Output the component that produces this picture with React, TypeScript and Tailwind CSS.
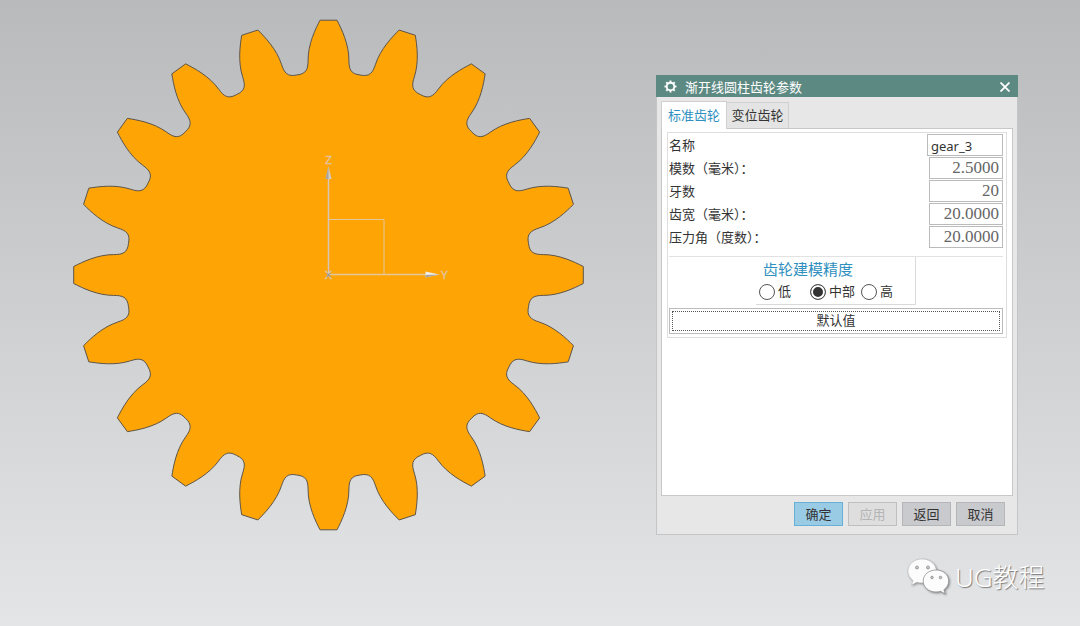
import { useState } from "react";

interface Param {
  id: string;
  label: string;
  value: string;
}

const params: Param[] = [
  { id: "module", label: "模数（毫米）：", value: "2.5000" },
  { id: "teeth", label: "牙数", value: "20" },
  { id: "width", label: "齿宽（毫米）：", value: "20.0000" },
  { id: "angle", label: "压力角（度数）：", value: "20.0000" },
];

const precisions = [
  { id: "low", label: "低", className: "w-[51px]" },
  { id: "mid", label: "中部", className: "w-[51px]" },
  { id: "high", label: "高", className: "w-[40px]" },
];

const TEETH = 20;

// right flank of one tooth, from the tip down to the middle of the root
const flank = [
  [8.5, -254.8],
  [13, -246],
  [20.4, -231],
  [20.4, -215],
  [20.4, -206],
  [22, -201],
  [31.7, -200],
];

function gearPath() {
  const step = (2 * Math.PI) / TEETH;
  const at = ([x, y]: number[], a: number) =>
    `${(x * Math.cos(a) - y * Math.sin(a)).toFixed(2)} ${(x * Math.sin(a) + y * Math.cos(a)).toFixed(2)}`;
  const mirrored = flank.map(([x, y]) => [-x, y]).reverse();
  let d = "";
  for (let i = 0; i < TEETH; i++) {
    const a = i * step;
    const r = flank.map((p) => at(p, a));
    const l = mirrored.map((p) => at(p, a + step));
    d += `${i === 0 ? "M" : "L"}${r[0]}`;
    d += `C${r[1]} ${r[2]} ${r[3]}C${r[4]} ${r[5]} ${r[6]}`;
    d += `C${l[1]} ${l[2]} ${l[3]}C${l[4]} ${l[5]} ${l[6]}`;
  }
  return d + "Z";
}

function Gear() {
  return (
    <svg className="absolute left-[68px] top-[15px]" width="520" height="520" viewBox="-260.5 -260 520 520">
      <path d={gearPath()} fill="#ffa405" stroke="#5d5549" strokeWidth="1" strokeLinejoin="round" />
      <g fill="none" stroke="#e3c79d" strokeWidth="1">
        <path d="M0 -55.5H55.5V0" />
        <path d="M0 -0.5H98" strokeWidth="1.3" />
        <path d="M0 0V-100" stroke="#d6c5b8" strokeWidth="1.5" />
      </g>
      <path d="M0 -109L3 -96H-3Z" fill="#d3ccc5" />
      <path d="M0 -109L0 -96H-3Z" fill="#a9a39d" />
      <path d="M111 -0.5L97 2.500V-3.500Z" fill="#f0ece6" />
      <path d="M111 -0.5L97 2.500V0Z" fill="#a8a39d" />
      <g fill="#dfc6a8" stroke="#dfc6a8" strokeWidth="0.3" fontFamily="Liberation Sans, sans-serif" fontSize="11" textAnchor="middle">
        <text x="0" y="-111">Z</text>
        <text x="116" y="4">Y</text>
        <text x="0" y="4" fill="#cfcac5">X</text>
      </g>
      <path d="M-2 -2L2 2M-2 2L2 -2" stroke="#8b8680" strokeWidth="1" />
    </svg>
  );
}

function CogIcon() {
  return (
    <svg width="13" height="13" viewBox="-6.5 -6.5 13 13" fill="none" stroke="#fff" aria-hidden="true">
      <circle r="3.8" strokeWidth="1.900" />
      {[0, 45, 90, 135, 180, 225, 270, 315].map((a) => (
        <path key={a} d="M0 -4V-6" strokeWidth="1.900" transform={`rotate(${a})`} />
      ))}
    </svg>
  );
}

function Watermark() {
  return (
    <div className="absolute left-[906px] top-[557px] flex items-center gap-[5px]">
      <svg width="44" height="40" viewBox="0 0 44 40" className="drop-shadow-[1px_1px_1px_#888]">
        <path
          d="M16 2C8 2 2 7.5 2 14.2c0 3.8 2 7 5 9.2L5.6 28l5.2-2.8c1.700.5 3.400.7 5.200.7 8 0 14.300-5.300 14.300-11.900S24 2 16 2Z"
          fill="#fcfcfc"
          stroke="#b4b5b7"
          strokeWidth="0.5"
        />
        <path
          d="M30 13c-7.200 0-12.800 4.800-12.800 11S22.800 35 30 35c1.600 0 3.200-.2 4.600-.7l4.600 2.700-1.300-4.300c2.900-2 4.800-5.100 4.800-8.700C42.700 17.800 37.200 13 30 13Z"
          fill="#fcfcfc"
          stroke="#909193"
          strokeWidth="0.8"
        />
        <g fill="#c4c5c6" stroke="#8d8e90" strokeWidth="0.8">
          <circle cx="11" cy="10.500" r="1.500" />
          <circle cx="22" cy="10.500" r="1.500" />
          <circle cx="26" cy="20.500" r="1.300" />
          <circle cx="34.500" cy="20.500" r="1.300" />
        </g>
      </svg>
      <span className="text-[26px] font-light leading-10 text-white [text-shadow:1px_1px_1px_#777]">UG教程</span>
    </div>
  );
}

export default function App() {
  const [tab, setTab] = useState("standard");
  const [precision, setPrecision] = useState("mid");

  const tabClass = (id: string) =>
    tab === id
      ? "h-[28px] w-[66px] -mb-px border border-b-0 border-[#d0d0d0] bg-white text-[#2f8fc0]"
      : "h-[26px] w-[62px] border border-l-0 border-b-0 border-[#d0d0d0] bg-[#e4e4e4] pt-px text-[#333]";

  const buttonClass = "h-6 w-[49px] border pt-px";

  return (
    <main className="relative min-h-screen overflow-hidden bg-linear-to-b from-[#b9babc] to-[#e4e5e7] font-['Noto_Sans','Noto_Sans_CJK_SC',sans-serif]">
      <Gear />

      <section
        role="dialog"
        aria-labelledby="dialog-title"
        className="absolute left-[656px] top-[75px] w-[362px] border border-t-0 border-[#c4c5c7] bg-[#e7e7e7] text-[13px] text-[#333]"
      >
        <header className="-mx-px flex h-[22px] items-center bg-[#5c8982] pl-2 pr-[5px] text-white">
          <CogIcon />
          <h1 id="dialog-title" className="ml-2 flex-1 pt-px text-[13px] leading-5">
            渐开线圆柱齿轮参数
          </h1>
          <button type="button" aria-label="关闭" className="flex h-4 w-4 items-center justify-center pt-px">
            <svg width="10" height="10" viewBox="0 0 10 10" fill="none" stroke="#fff" strokeWidth="1.800">
              <path d="M0.5 0.5L9.500 9.500M9.500 0.5L0.500 9.500" />
            </svg>
          </button>
        </header>

        <div className="px-1 pb-2 pt-1">
          <div role="tablist" className="flex items-end">
            <button type="button" role="tab" aria-selected={tab === "standard"} onClick={() => setTab("standard")} className={tabClass("standard")}>
              标准齿轮
            </button>
            <button type="button" role="tab" aria-selected={tab === "modified"} onClick={() => setTab("modified")} className={tabClass("modified")}>
              变位齿轮
            </button>
          </div>

          <div role="tabpanel" className="min-h-[368px] border border-[#c8c8c8] bg-white px-[5px] pt-[3px]">
            <div className="border border-[#dedede] pb-[3px] pl-px pr-[3px] pt-px">
              <div className="flex flex-col gap-px">
                <div className="flex h-[22px] items-center justify-between">
                  <label htmlFor="name" className="pt-[2px]">
                    名称
                  </label>
                  <input
                    id="name"
                    defaultValue="gear_3"
                    className="h-[22px] w-[76px] border border-[#bbb] bg-white px-[3px] pt-px text-[13px] outline-none"
                  />
                </div>
                {params.map((p) => (
                  <div key={p.id} className="flex h-[22px] items-center justify-between">
                    <label htmlFor={p.id} className="pt-[2px]">
                      {p.label}
                    </label>
                    <input
                      id={p.id}
                      defaultValue={p.value}
                      className="h-[22px] w-[74px] border border-[#bbb] bg-white px-[3px] text-right font-['Liberation_Serif',serif] text-[17px] text-[#666] outline-none"
                    />
                  </div>
                ))}
              </div>

              <fieldset className="mt-2 border-t border-[#e2e2e2]">
                <div className="ml-[87px] w-[160px] border-b border-r border-[#dadada] pb-[2px] pl-[3px]">
                  <legend className="w-[98px] text-center text-[15px] leading-6 text-[#2f8fc0]">齿轮建模精度</legend>
                  <div className="mt-px flex h-5 items-center">
                    {precisions.map((p) => (
                      <label key={p.id} className={`flex items-center gap-[3px] whitespace-nowrap ${p.className}`}>
                        <input
                          type="radio"
                          name="precision"
                          checked={precision === p.id}
                          onChange={() => setPrecision(p.id)}
                          className="h-4 w-4 shrink-0 appearance-none rounded-full border border-[#555] bg-white checked:bg-[#333] checked:shadow-[inset_0_0_0_2px_white]"
                        />
                        {p.label}
                      </label>
                    ))}
                  </div>
                </div>
              </fieldset>

              <button type="button" className="mt-[3px] block h-[26px] w-full border border-[#bbb] bg-white p-[2px]">
                <span className="flex h-full items-center justify-center border border-dotted border-[#555]">默认值</span>
              </button>
            </div>
          </div>

          <div className="mt-[6px] flex justify-end gap-[5px] pr-2">
            <button type="submit" className={`${buttonClass} border-[#68b0d8] bg-[#9acbe5]`}>
              确定
            </button>
            <button type="button" disabled className={`${buttonClass} border-[#bfbfbf] bg-[#dedede] text-[#b5b5b5]`}>
              应用
            </button>
            <button type="button" className={`${buttonClass} border-[#b5b6b8] bg-[#c9cacd]`}>
              返回
            </button>
            <button type="button" className={`${buttonClass} border-[#b5b6b8] bg-[#c9cacd]`}>
              取消
            </button>
          </div>
        </div>
      </section>

      <Watermark />
    </main>
  );
}
